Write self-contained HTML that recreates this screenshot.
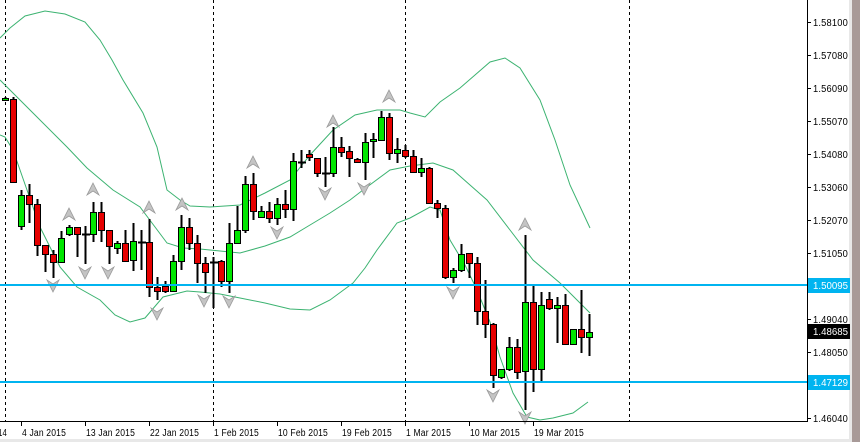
<!DOCTYPE html>
<html><head><meta charset="utf-8"><style>
html,body{margin:0;padding:0;background:#fff;width:860px;height:442px;overflow:hidden}
svg{display:block;font-family:"Liberation Sans",Tahoma,sans-serif}
</style></head><body>
<svg id="s" width="860" height="442" viewBox="0 0 860 442" xmlns="http://www.w3.org/2000/svg">
<rect width="860" height="442" fill="#fff"/>
<rect x="852" y="0" width="8" height="442" fill="#a89a98"/>
<rect x="849" y="0" width="3" height="442" fill="#e8e8e8"/>
<rect x="0" y="439" width="852" height="3" fill="#e8e8e8"/>
<g stroke="#000" stroke-dasharray="3,3" stroke-width="1">
<line x1="5.5" y1="0" x2="5.5" y2="421"/>
<line x1="213.5" y1="0" x2="213.5" y2="421"/>
<line x1="405.5" y1="0" x2="405.5" y2="421"/>
<line x1="629.5" y1="0" x2="629.5" y2="421"/>
</g>
<g fill="none" stroke="#3cb371" stroke-width="1">
<polyline points="0,38 10,28 25,16 45,11 65,14 85,22 100,40 112,60 123,80 143,113 157,147 167,190 180,200 190,206 210,207 240,205 265,193 290,180 310,155 333,130 355,115 377,110 400,110 410,113 425,117 440,102 460,88 475,75 490,62 505,58 520,68 540,100 555,140 570,185 590,228"/>
<polyline points="0,80 33,113 67,147 87,168 113,190 140,207 167,243 183,248 200,249 240,253 265,246 290,237 310,225 330,213 350,200 363,190 390,170 410,166 433,163 453,170 470,185 487,200 510,230 533,260 560,283 590,313"/>
<polyline points="0,135 5,137 13,150 27,190 40,227 60,267 77,287 100,300 115,315 130,322 145,318 163,297 187,291 200,292 220,294 240,298 265,303 290,309 310,310 330,300 353,283 365,268 377,250 397,223 410,218 430,207 440,210 450,240 465,265 477,290 490,322 500,357 513,393 527,417 540,420 553,418 573,413 588,402"/>
</g>
<g id="c"></g>
<g id="ar"></g>
<g stroke="#00b4f0" stroke-width="2"><line x1="0" y1="285" x2="807" y2="285"/><line x1="0" y1="382" x2="807" y2="382"/></g>
<line x1="807.5" y1="0" x2="807.5" y2="422" stroke="#000"/>
<line x1="0" y1="421.5" x2="808" y2="421.5" stroke="#000"/>
<g id="ax" font-size="10" fill="#000" letter-spacing="0.2"></g>
<rect x="808" y="278" width="42" height="15" fill="#00b4f0"/><text x="813" y="289" font-size="10" fill="#fff" textLength="35" lengthAdjust="spacingAndGlyphs">1.50095</text>
<rect x="808" y="324" width="42" height="15" fill="#000"/><text x="813" y="335" font-size="10" fill="#fff" textLength="35" lengthAdjust="spacingAndGlyphs">1.48685</text>
<rect x="808" y="375" width="42" height="15" fill="#00b4f0"/><text x="813" y="386" font-size="10" fill="#fff" textLength="35" lengthAdjust="spacingAndGlyphs">1.47129</text>
</svg>
<script>
var C=[[98,100,97,101,1],[99,182,97,182,0],[226,195,190,230,1],[195,204,184,223,0],[204,245,199,256,0],[245,254,245,272,0],[254,262,250,278,0],[262,238,231,262,1],[234,227,225,236,1],[227,234,227,257,0],[234,234,226,264,2],[234,212,202,242,1],[212,230,202,242,0],[230,246,230,264,0],[248,243,241,254,1],[243,261,230,262,0],[260,241,223,271,1],[242,242,230,270,2],[242,287,219,297,0],[287,291,277,300,0],[286,291,281,293,0],[291,261,255,291,1],[261,227,215,270,1],[227,243,218,250,0],[243,263,235,283,0],[263,272,257,293,0],[262,262,257,308,2],[261,281,260,287,0],[281,243,223,293,1],[243,230,206,244,1],[230,184,176,233,1],[184,211,173,220,0],[217,211,206,217,1],[211,218,202,223,0],[218,204,198,225,1],[204,209,190,218,0],[209,161,153,221,1],[162,162,150,168,2],[154,157,150,161,0],[158,173,158,177,0],[173,173,157,187,2],[173,147,127,177,1],[147,152,137,157,0],[151,158,146,177,0],[159,162,158,162,0],[162,142,133,180,1],[141,139,133,158,1],[140,117,111,140,1],[117,153,113,160,0],[153,149,138,163,1],[150,156,145,158,0],[156,172,150,173,0],[172,168,158,177,1],[168,203,167,203,0],[203,208,200,218,0],[208,277,205,279,0],[277,270,268,283,1],[270,254,244,272,1],[253,263,253,278,0],[263,311,257,325,0],[311,324,280,338,0],[324,375,323,388,0],[377,369,369,379,1],[369,347,337,371,1],[347,372,339,379,0],[371,302,235,410,1],[302,369,286,392,0],[369,305,292,381,1],[299,308,292,310,0],[308,305,297,343,1],[305,344,294,344,0],[344,329,329,344,1],[329,337,290,353,0],[337,332,314,356,1]];
var g=document.getElementById("c"),h="";
C.forEach(function(c,i){var x=5+8*i;h+='<line x1="'+(x+0.5)+'" y1="'+c[2]+'" x2="'+(x+0.5)+'" y2="'+c[3]+'" stroke="#000" stroke-width="2"/>';
var t=Math.min(c[0],c[1]),b=Math.max(c[0],c[1]);
if(c[4]==2||b-t<1){h+='<rect x="'+(x-3)+'" y="'+(t-0.5)+'" width="8" height="2" fill="#000"/>';}
else h+='<rect x="'+(x-2.5)+'" y="'+(t+0.5)+'" width="6" height="'+(b-t)+'" fill="'+(c[4]?"#00e600":"#e60000")+'" stroke="#000" stroke-width="1"/>';});
g.innerHTML=h;
var up=[[93,190],[69,215],[149,208],[182,205],[253,163],[333,122],[389,97],[525,225]],dn=[[53,285],[85,272],[108,272],[157,313],[204,300],[229,301],[277,232],[325,193],[364,188],[453,292],[493,395],[525,417]];h="";
up.forEach(function(p){var x=p[0],y=p[1];h+='<path d="M'+x+','+(y-7)+' L'+(x+6)+','+(y+5)+' L'+x+','+(y+1)+' L'+(x-6)+','+(y+5)+'Z" fill="#c4c4c4" stroke="#999" stroke-width="0.8"/>';});
dn.forEach(function(p){var x=p[0],y=p[1];h+='<path d="M'+x+','+(y+7)+' L'+(x+6)+','+(y-5)+' L'+x+','+(y-1)+' L'+(x-6)+','+(y-5)+'Z" fill="#c4c4c4" stroke="#999" stroke-width="0.8"/>';});
document.getElementById("ar").innerHTML=h;
var L=[["1.58100",22],["1.57080",55],["1.56090",88],["1.55070",121],["1.54080",154],["1.53060",187],["1.52070",220],["1.51050",253],["1.49040",319],["1.48050",352],["1.46040",418]];h="";
L.forEach(function(l){h+='<line x1="808" y1="'+(l[1]+0.5)+'" x2="811" y2="'+(l[1]+0.5)+'" stroke="#000"/><text x="813" y="'+(l[1]+4)+'" textLength="35" lengthAdjust="spacingAndGlyphs">'+l[0]+'</text>';});
var D=[["14",-3,9],["4 Jan 2015",21,44],["13 Jan 2015",85,49],["22 Jan 2015",149,49],["1 Feb 2015",213,45],["10 Feb 2015",277,50],["19 Feb 2015",341,50],["1 Mar 2015",405,45],["10 Mar 2015",469,50],["19 Mar 2015",533,50]];
D.forEach(function(d){if(d[1]>0)h+='<line x1="'+(d[1]+0.5)+'" y1="422" x2="'+(d[1]+0.5)+'" y2="426" stroke="#000"/>';h+='<text x="'+(d[1]+1)+'" y="436" textLength="'+d[2]+'" lengthAdjust="spacingAndGlyphs">'+d[0]+'</text>';});
document.getElementById("ax").innerHTML=h;
</script>
</body></html>
